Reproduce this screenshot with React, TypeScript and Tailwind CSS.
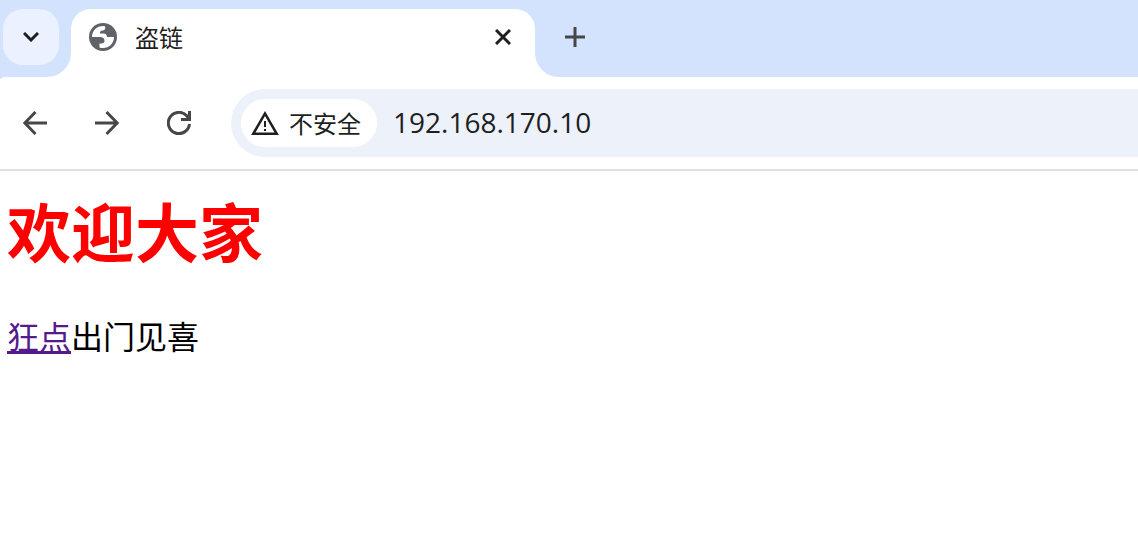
import type { ReactNode } from "react";

const IconButton = ({ label, children }: { label: string; children: ReactNode }) => (
  <button
    type="button"
    aria-label={label}
    className="flex size-14 shrink-0 items-center justify-center rounded-full text-[#474747]"
  >
    {children}
  </button>
);

const GlobeIcon = () => (
  <svg viewBox="0 0 28 28" className="size-7 shrink-0" aria-hidden="true">
    <circle cx="14" cy="14" r="14" fill="#5f6368" />
    <path
      d="M3 14C3 7.600 8 3 14 3Q16.500 3 16.300 4.300Q16.200 7.500 13.500 7.500Q10.800 7.500 10.800 10.500H14.500Q17.800 10.700 18 14H25C25 20.500 20 25 14 25Q12 25 10.500 24.500V20.500H12.500Q15.500 20.300 15.500 17.500Q15.300 14 11 14Z"
      fill="#fff"
    />
  </svg>
);

const TabStrip = () => (
  <header className="flex h-[77px] bg-white">
    <div className="flex w-[71px] shrink-0 items-start rounded-br-3xl bg-[#d3e3fd] pt-[9px] pl-[3px]">
      <button
        type="button"
        aria-label="搜索标签页"
        className="flex size-14 items-center justify-center rounded-[20px] bg-[#ebf1fe] text-[#1f1f1f]"
      >
        <svg viewBox="0 0 16 10" className="h-[10px] w-4" fill="none" stroke="currentColor" strokeWidth="3">
          <path d="M1 1l7 7 7-7" />
        </svg>
      </button>
    </div>
    <div className="w-[464px] shrink-0 bg-[#d3e3fd] pt-[9px]">
      <div className="flex h-full items-start gap-4 rounded-t-[20px] bg-white pr-4 pl-[18px]">
        <div className="flex h-14 flex-1 items-center gap-[18px]">
          <GlobeIcon />
          <span className="text-2xl text-[#1f1f1f]">盗链</span>
        </div>
        <button type="button" aria-label="关闭" className="flex h-14 w-8 items-center justify-center text-[#1f1f1f]">
          <svg viewBox="0 0 16 16" className="size-4" fill="none" stroke="currentColor" strokeWidth="3">
            <path d="M1 1l14 14M15 1L1 15" />
          </svg>
        </button>
      </div>
    </div>
    <div className="flex-1 rounded-bl-3xl bg-[#d3e3fd] pt-[9px] pl-3">
      <IconButton label="打开新的标签页">
        <svg viewBox="0 0 20 20" className="size-5" fill="none" stroke="currentColor" strokeWidth="3">
          <path d="M10 0v20M0 10h20" />
        </svg>
      </IconButton>
    </div>
  </header>
);

const Toolbar = () => (
  <div className="bg-[#d3e3fd]">
    <div className="flex items-center gap-4 rounded-tl-[6px_3px] border-b-2 border-[#e1e1e1] bg-white pt-3 pb-3 pl-[7px]">
      <IconButton label="返回">
        <svg viewBox="0 0 24 24" className="size-6" fill="none" stroke="currentColor" strokeWidth="3">
          <path d="M24 12H2M12.500 1L1.800 12l10.700 11" />
        </svg>
      </IconButton>
      <IconButton label="前进">
        <svg viewBox="0 0 24 24" className="size-6" fill="none" stroke="currentColor" strokeWidth="3">
          <path d="M0 12h22M11.500 1l10.700 11-10.700 11" />
        </svg>
      </IconButton>
      <IconButton label="重新加载">
        <svg viewBox="0 0 24 24" className="size-6" fill="none" stroke="currentColor" strokeWidth="3">
          <path d="M22.500 13a10.600 10.600 0 1 1-3-8.500l3 3.500" />
          <path d="M22.500 0v8.500H14" />
        </svg>
      </IconButton>
      <div className="ml-2 flex h-[68px] flex-1 items-center gap-4 rounded-l-full bg-[#ecf1fa] pl-[10px]">
        <button
          type="button"
          className="flex h-12 shrink-0 items-center gap-[10px] rounded-full bg-white pr-4 pl-[10px] text-2xl text-[#1f1f1f]"
        >
          <svg viewBox="1 2 22 19" className="h-6 w-7" fill="currentColor">
            <path d="M12 5.990L19.530 19H4.470L12 5.990M12 2L1 21h22L12 2zm.8 14.200h-1.600v1.600h1.600v-1.600zm0-6.200h-1.600v4.600h1.600V10z" />
          </svg>
          不安全
        </button>
        <input
          type="text"
          aria-label="地址和搜索栏"
          defaultValue="192.168.170.10"
          className="min-w-0 flex-1 bg-transparent pb-0.5 font-['Open_Sans','Noto_Sans_CJK_SC',sans-serif] text-[28px] text-[#1f1f1f] outline-none"
        />
      </div>
    </div>
  </div>
);

export default function App() {
  return (
    <div className="min-h-screen bg-white font-['Noto_Sans_CJK_SC',sans-serif]">
      <TabStrip />
      <Toolbar />
      <main className="px-[7px] pt-[14px] text-[32px] text-black">
        <h1 className="text-[64px] leading-[88px] font-bold text-[#ff0000]">欢迎大家</h1>
        <p className="mt-10 leading-[44px]">
          <a href="#" className="text-[#551a8b] underline">
            狂点
          </a>
          出门见喜
        </p>
      </main>
    </div>
  );
}
